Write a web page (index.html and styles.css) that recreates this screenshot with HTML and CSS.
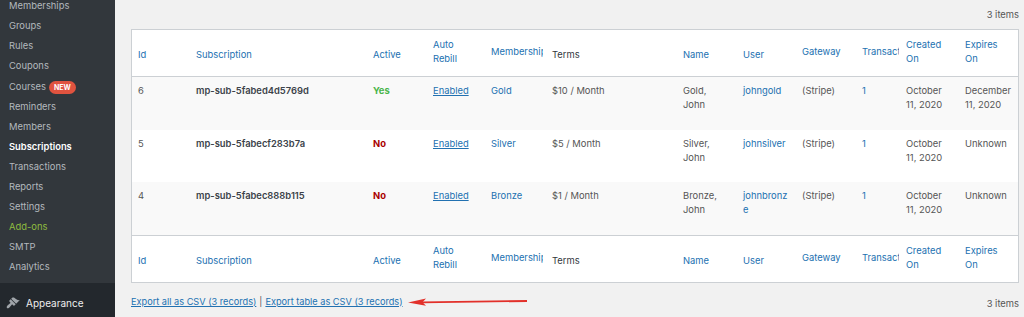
FILE: index.html
```html
<!DOCTYPE html>
<html lang="en">
<head>
    <meta charset="UTF-8">
    <title>Subscriptions</title>
    <link rel="stylesheet" href="styles.css">
</head>
<body>

    <!-- Admin sidebar -->
    <aside class="sidebar">
        <ul class="submenu">
            <li>Memberships</li>
            <li>Groups</li>
            <li>Rules</li>
            <li>Coupons</li>
            <li class="courses">Courses<span class="badge-new">NEW</span></li>
            <li>Reminders</li>
            <li>Members</li>
            <li class="current">Subscriptions</li>
            <li>Transactions</li>
            <li>Reports</li>
            <li>Settings</li>
            <li class="addons">Add-ons</li>
            <li>SMTP</li>
            <li>Analytics</li>
        </ul>
        <div class="menu-top">
            <svg class="menu-icon" viewBox="0 0 20 20" width="14" height="14">
                <path d="M14.5 11.1L7.4 4l1.5-1.5c.5-.6 2.3-.5 3.5.3 1.2.8 1.4 1.3 2.9 2.1 1.2.6 2.5 1.3 4.5.9zm-.7.7L6.7 4.7 4.9 6.5c-.4.4-.4 1 0 1.4L6 8.9c.4.4.4 1 0 1.4-.6.6-1.4 1.1-2.2 1.7-.35.26-.7.53-1 .84C1.4 14.2.4 16.1 1.4 17.1c1 1 2.8 0 4.2-1.4.3-.3.6-.7.85-1 .57-.8 1.1-1.6 1.7-2.2.4-.4 1-.4 1.4 0l1.06 1.06c.4.4 1 .4 1.4 0z"/>
            </svg>
            <span>Appearance</span>
        </div>
    </aside>

    <!-- Main content -->
    <main class="content">
        <div class="tablenav-top">3 items</div>

        <table class="list-table">
            <colgroup>
                <col style="width: 58px">
                <col style="width: 177px">
                <col style="width: 60px">
                <col style="width: 58px">
                <col style="width: 61px">
                <col style="width: 131px">
                <col style="width: 60px">
                <col style="width: 59px">
                <col style="width: 60px">
                <col style="width: 44px">
                <col style="width: 59px">
                <col style="width: 59px">
            </colgroup>
            <thead>
                <tr>
                    <th>Id</th>
                    <th>Subscription</th>
                    <th>Active</th>
                    <th class="sort">Auto Rebill</th>
                    <th class="sort clip"><span class="clip-text">Membership</span></th>
                    <th class="plain">Terms</th>
                    <th>Name</th>
                    <th>User</th>
                    <th class="sort">Gateway</th>
                    <th class="sort clip tight"><span class="clip-text">Transactions</span></th>
                    <th class="sort">Created On</th>
                    <th class="sort">Expires On</th>
                </tr>
            </thead>
            <tbody>
                <tr class="alt">
                    <td>6</td>
                    <td class="sub-id">mp-sub-5fabed4d5769d</td>
                    <td class="yes">Yes</td>
                    <td><a class="ul" href="#">Enabled</a></td>
                    <td><a href="#">Gold</a></td>
                    <td>$10 / Month</td>
                    <td>Gold, John</td>
                    <td class="user"><a href="#">johngold</a></td>
                    <td>(Stripe)</td>
                    <td><a href="#">1</a></td>
                    <td>October 11, 2020</td>
                    <td>December 11, 2020</td>
                </tr>
                <tr>
                    <td>5</td>
                    <td class="sub-id">mp-sub-5fabecf283b7a</td>
                    <td class="no">No</td>
                    <td><a class="ul" href="#">Enabled</a></td>
                    <td><a href="#">Silver</a></td>
                    <td>$5 / Month</td>
                    <td>Silver, John</td>
                    <td class="user"><a href="#">johnsilver</a></td>
                    <td>(Stripe)</td>
                    <td><a href="#">1</a></td>
                    <td>October 11, 2020</td>
                    <td>Unknown</td>
                </tr>
                <tr class="alt">
                    <td>4</td>
                    <td class="sub-id">mp-sub-5fabec888b115</td>
                    <td class="no">No</td>
                    <td><a class="ul" href="#">Enabled</a></td>
                    <td><a href="#">Bronze</a></td>
                    <td>$1 / Month</td>
                    <td>Bronze, John</td>
                    <td class="user"><a href="#">johnbronze</a></td>
                    <td>(Stripe)</td>
                    <td><a href="#">1</a></td>
                    <td>October 11, 2020</td>
                    <td>Unknown</td>
                </tr>
            </tbody>
            <tfoot>
                <tr>
                    <th>Id</th>
                    <th>Subscription</th>
                    <th>Active</th>
                    <th class="sort">Auto Rebill</th>
                    <th class="sort clip"><span class="clip-text">Membership</span></th>
                    <th class="plain">Terms</th>
                    <th>Name</th>
                    <th>User</th>
                    <th class="sort">Gateway</th>
                    <th class="sort clip tight"><span class="clip-text">Transactions</span></th>
                    <th class="sort">Created On</th>
                    <th class="sort">Expires On</th>
                </tr>
            </tfoot>
        </table>

        <div class="tablenav-bottom">
            <div class="export-links">
                <a class="ul" href="#">Export all as CSV (3 records)</a>
                <span class="sep">|</span>
                <a class="ul" href="#">Export table as CSV (3 records)</a>
                <!-- annotation arrow -->
                <svg class="arrow" viewBox="0 0 120 10" width="120" height="10">
                    <line x1="14" y1="5.3" x2="119" y2="4" stroke="#e2302a" stroke-width="1.8"/>
                    <polygon points="0,5.4 18,1.6 14.5,5.2 18,8.8" fill="#e2302a"/>
                </svg>
            </div>
            <div class="count">3 items</div>
        </div>
    </main>

</body>
</html>
```

FILE: styles.css
```css
/* General */
body {
    margin: 0;
    height: 317px;
    overflow: hidden;
    display: flex;
    background-color: #f1f1f1;
    font-family: Inter, "Liberation Sans", sans-serif;
    color: #555;
}

a {
    color: #2271b1;
    text-decoration: none;
}

a.ul {
    text-decoration: underline;
}

/* Sidebar */
.sidebar {
    width: 115px;
    flex-shrink: 0;
    background-color: #32373c;
    display: flex;
    flex-direction: column;
}

.submenu {
    list-style: none;
    margin: -4.3px 0 0;
    padding: 0 0 6px;
}

.submenu li {
    height: 20px;
    line-height: 20px;
    padding-left: 9px;
    font-size: 9.4px;
    color: #b4b9be;
    white-space: nowrap;
}

.submenu li.courses {
    height: 21.4px;
    line-height: 21.4px;
}

.submenu li.current {
    color: #fff;
    font-weight: 600;
}

.submenu li.addons {
    color: #8fbc3f;
}

.badge-new {
    display: inline-block;
    margin-left: 3px;
    padding: 0 5px;
    height: 13px;
    line-height: 13px;
    border-radius: 7px;
    background-color: #e0533f;
    color: #fff;
    font-size: 7px;
    font-weight: 700;
    vertical-align: 0;
}

.menu-top {
    flex: 1;
    background-color: #23282d;
    display: flex;
    align-items: center;
    gap: 6px;
    padding: 6px 0 0 6px;
    color: #eee;
    font-size: 10px;
}

.menu-icon {
    fill: #a0a5aa;
}

/* Main */
.content {
    flex: 1;
    padding: 0 5px 0 16px;
}

.tablenav-top {
    height: 29px;
    box-sizing: border-box;
    padding-top: 8px;
    line-height: 14px;
    text-align: right;
    font-size: 9.4px;
}

/* Table */
.list-table {
    width: 888px;
    table-layout: fixed;
    border-collapse: separate;
    border-spacing: 0;
    border: 1px solid #ccd0d4;
    background-color: #fff;
    font-size: 9.4px;
    line-height: 14px;
}

.list-table th {
    height: 42px;
    padding: 4px 6px 0;
    text-align: left;
    font-weight: 400;
    color: #2271b1;
    vertical-align: middle;
}

.list-table th.sort {
    height: 36px;
    padding-bottom: 6px;
}

.list-table th.clip {
    white-space: nowrap;
    padding-right: 3px;
}

.list-table th.tight {
    padding-right: 1px;
}

.clip-text {
    display: block;
    overflow: hidden;
}

.list-table th.plain {
    color: #32373c;
}

.list-table thead th {
    border-bottom: 1px solid #ccd0d4;
}

.list-table tfoot th {
    border-top: 1px solid #ccd0d4;
}

.list-table td {
    height: 45.5px;
    padding: 7px 6px 0;
    vertical-align: top;
}

.list-table tr.alt td {
    background-color: #f9f9f9;
}

.list-table td.sub-id {
    font-weight: 600;
    color: #3c434a;
}

.list-table td.yes {
    font-weight: 700;
    color: #4ab54a;
}

.list-table td.no {
    font-weight: 700;
    color: #a00;
}

.list-table td.user {
    word-break: break-all;
}

/* Bottom nav */
.tablenav-bottom {
    display: flex;
    justify-content: space-between;
    margin-top: 10px;
    font-size: 9.4px;
    line-height: 14px;
}

.export-links {
    display: flex;
    align-items: center;
    font-size: 9.2px;
}

.sep {
    margin: 0 3px;
    color: #555;
}

.arrow {
    margin-left: 5px;
}

.count {
    padding-top: 4px;
}
```
